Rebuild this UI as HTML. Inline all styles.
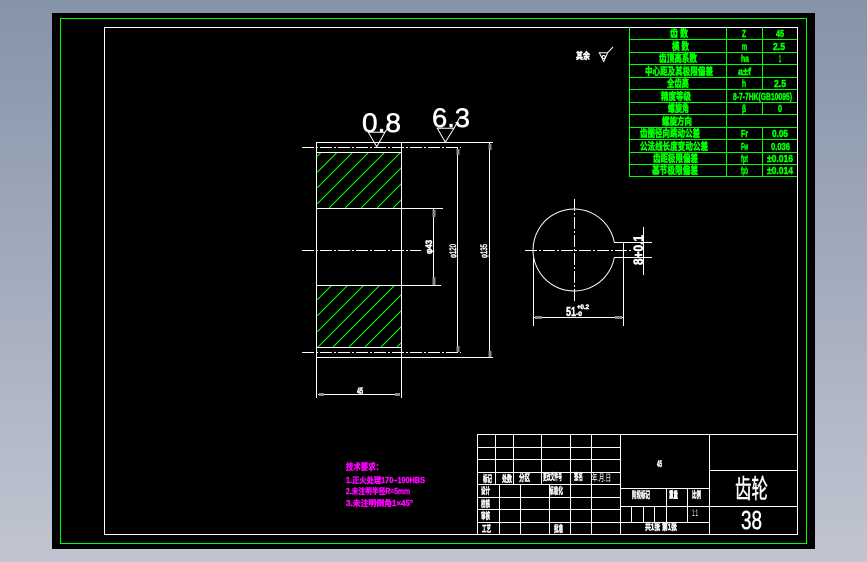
<!DOCTYPE html>
<html><head><meta charset="utf-8"><style>
html,body{margin:0;padding:0;width:867px;height:562px;overflow:hidden;background:linear-gradient(180deg,#8594a9 0%,#a3acbd 50%,#c1c5d1 100%)}
svg{position:absolute;left:0;top:0}
text{font-family:"Liberation Sans","Noto Sans CJK SC",sans-serif}
.g text{fill:#0f0;stroke:#0f0;stroke-width:.55;font-size:10px;font-weight:700}
.w text{fill:#fff;stroke:#fff;stroke-width:.5;font-size:9px;font-weight:700}
.m text{fill:#f0f;stroke:#f0f;stroke-width:.4;font-size:8px;font-weight:700}
</style></head><body>
<svg width="867" height="562" viewBox="0 0 867 562" xmlns="http://www.w3.org/2000/svg">
<rect x="52" y="13" width="763" height="536" fill="#000"/>
<g shape-rendering="crispEdges" fill="none">
<rect x="60.5" y="18.5" width="746" height="525" stroke="#0f0"/>
<rect x="104.5" y="27.5" width="693" height="507" stroke="#fff"/>
<!-- param table -->
<path stroke="#0f0" d="M629.5 27V177M726.5 27V177M762.5 27V89M762.5 102V114M762.5 127V177M630 39.5H797M630 52.5H797M630 64.5H797M630 77.5H797M630 89.5H797M630 102.5H797M630 114.5H797M630 127.5H797M630 139.5H797M630 152.5H797M630 164.5H797M630 176.5H797"/>
<!-- title block -->
<path stroke="#fff" d="M477.5 434V535M477.5 434.5H797M478 447.5H620M478 459.5H620M478 472.5H620M478 484.5H620M478 497.5H620M478 509.5H620M478 522.5H620M495.5 434V484M513.5 434V484M541.5 434V484M570.5 434V534M591.5 434V534M499.5 484V534M520.5 484V534M549.5 484V534M620.5 434V534M709.5 434V534M620 488.5H709M620 506.5H709M620 522.5H709M666.5 488V522M687.5 488V522M631.5 506V522M643.5 506V522M654.5 506V522M710 470.5H797M710 506.5H797"/>
<!-- hatching -->
<g stroke="#0f0">
<path d="M317 156.500L320.500 153M317 172.500L336.500 153M317 188L352 153M317 204L368 153M329 208L384 153M345 208L400.500 152.500M361 208L401 168M377 208L401 184M393 208L401 200"/>
<path d="M317 300L331 286M317 316L347 286M317 332L363 286M317 348L379 286M333 347L394 286M349 347L401 295M365 347L401 311M381 347L401 327M397 347L401 343"/>
</g>
<!-- part lines -->
<g stroke="#fff">
<path d="M316.500 142V398M401.500 142V398M316.500 142.500H493M316.500 152.500H401M316.500 208.500H443M316.500 285.500H441M316.500 347.500H401M316.500 357.500H493"/>
<path d="M302 147.500H461M302 352.500H461M302 250.500H421" stroke-dasharray="12 2 2 2"/>
<path d="M433.500 209V285M457.500 148V352M489.500 143V357M318 394.500H400"/>
<!-- keyway view -->
<path d="M525 250.500H633M574.500 199V302" stroke-dasharray="12 2 2 2"/>
<path d="M614 242.500H652M614 257.500H652M643.500 227V275M623.500 243V326M533.500 258V326M534 317.500H623"/>
</g>
<!-- arrows -->
<g stroke="#8a8a8a" stroke-width="3">
<path d="M434 210V217M434 277V285M458 149V155M458 346V352M490 144V150M490 351V357M319 394.500H324M395 394.500H400M535 317.500H542M615 317.500H622"/>
</g>
</g>
<path fill="none" stroke="#fff" stroke-width="1" d="M614.300 242.300A41 41 0 1 0 614.300 257.700"/>
<g fill="none" stroke="#fff" stroke-width="1">
<path d="M368.300 132.300H385L376.700 146.700ZM385 132.300L392 121"/>
<path d="M437.300 128.300H454L445.300 142.300ZM454 128.300L460 117"/>
<path d="M599.300 52.700H607.700L603.700 61.500ZM607.700 52.700L613 47"/>
<circle cx="603.700" cy="57" r="1.500"/>
</g>
<g class="g">
<text x="670" y="37" textLength="18" lengthAdjust="spacingAndGlyphs">齿 数</text>
<text x="672" y="50" textLength="17" lengthAdjust="spacingAndGlyphs">模 数</text>
<text x="659" y="62" textLength="38" lengthAdjust="spacingAndGlyphs">齿顶高系数</text>
<text x="645" y="75" textLength="68" lengthAdjust="spacingAndGlyphs">中心距及其极限偏差</text>
<text x="667" y="87" textLength="22" lengthAdjust="spacingAndGlyphs">全齿高</text>
<text x="661" y="100" textLength="30" lengthAdjust="spacingAndGlyphs">精度等级</text>
<text x="668" y="112" textLength="21" lengthAdjust="spacingAndGlyphs">螺旋角</text>
<text x="662" y="125" textLength="30" lengthAdjust="spacingAndGlyphs">螺旋方向</text>
<text x="640" y="137" textLength="60" lengthAdjust="spacingAndGlyphs">齿圈径向跳动公差</text>
<text x="640" y="150" textLength="68" lengthAdjust="spacingAndGlyphs">公法线长度变动公差</text>
<text x="653" y="162" textLength="45" lengthAdjust="spacingAndGlyphs">齿距极限偏差</text>
<text x="652" y="174" textLength="46" lengthAdjust="spacingAndGlyphs">基节极限偏差</text>
<text x="742" y="37" textLength="4" lengthAdjust="spacingAndGlyphs">Z</text>
<text x="776" y="37" textLength="8" lengthAdjust="spacingAndGlyphs">45</text>
<text x="742" y="50" textLength="5" lengthAdjust="spacingAndGlyphs">m</text>
<text x="773" y="50" textLength="12" lengthAdjust="spacingAndGlyphs">2.5</text>
<text x="741" y="62" textLength="8" lengthAdjust="spacingAndGlyphs">ha</text>
<text x="779" y="62" textLength="2" lengthAdjust="spacingAndGlyphs">1</text>
<text x="738" y="75" textLength="13" lengthAdjust="spacingAndGlyphs">a±f</text>
<text x="742" y="87" textLength="4" lengthAdjust="spacingAndGlyphs">h</text>
<text x="774" y="87" textLength="12" lengthAdjust="spacingAndGlyphs">2.5</text>
<text x="733" y="100" textLength="59" lengthAdjust="spacingAndGlyphs">8-7-7HK(GB10095)</text>
<text x="742" y="112" textLength="4" lengthAdjust="spacingAndGlyphs">β</text>
<text x="778" y="112" textLength="4" lengthAdjust="spacingAndGlyphs">0</text>
<text x="741" y="137" textLength="7" lengthAdjust="spacingAndGlyphs">Fr</text>
<text x="772" y="137" textLength="16" lengthAdjust="spacingAndGlyphs">0.05</text>
<text x="741" y="150" textLength="7" lengthAdjust="spacingAndGlyphs">Fw</text>
<text x="771" y="150" textLength="19" lengthAdjust="spacingAndGlyphs">0.036</text>
<text x="741" y="162" textLength="7" lengthAdjust="spacingAndGlyphs">fpt</text>
<text x="767" y="162" textLength="26" lengthAdjust="spacingAndGlyphs">±0.016</text>
<text x="741" y="174" textLength="7" lengthAdjust="spacingAndGlyphs">fpb</text>
<text x="767" y="174" textLength="26" lengthAdjust="spacingAndGlyphs">±0.014</text>
</g>
<g class="w">
<text x="483" y="482" textLength="9" lengthAdjust="spacingAndGlyphs">标记</text>
<text x="502" y="482" textLength="10" lengthAdjust="spacingAndGlyphs">处数</text>
<text x="519" y="481" textLength="11" lengthAdjust="spacingAndGlyphs">分区</text>
<text x="543" y="480" textLength="19" lengthAdjust="spacingAndGlyphs">更改文件号</text>
<text x="574" y="480" textLength="9" lengthAdjust="spacingAndGlyphs">签名</text>
<text x="592" y="481" textLength="19" lengthAdjust="spacingAndGlyphs" style="font-weight:400;stroke-width:.1">年.月.日</text>
<text x="481" y="494" textLength="9" lengthAdjust="spacingAndGlyphs">设计</text>
<text x="549" y="494" textLength="14" lengthAdjust="spacingAndGlyphs">标准化</text>
<text x="481" y="507" textLength="9" lengthAdjust="spacingAndGlyphs">校核</text>
<text x="481" y="519" textLength="9" lengthAdjust="spacingAndGlyphs">审核</text>
<text x="482" y="532" textLength="9" lengthAdjust="spacingAndGlyphs">工艺</text>
<text x="554" y="532" textLength="9" lengthAdjust="spacingAndGlyphs">批准</text>
<text x="657" y="467" textLength="5" lengthAdjust="spacingAndGlyphs">45</text>
<text x="632" y="498" textLength="18" lengthAdjust="spacingAndGlyphs">阶段标记</text>
<text x="669" y="498" textLength="9" lengthAdjust="spacingAndGlyphs">重量</text>
<text x="692" y="498" textLength="9" lengthAdjust="spacingAndGlyphs">比例</text>
<text x="692" y="516" textLength="6" lengthAdjust="spacingAndGlyphs" style="font-weight:400;stroke-width:0">1:1</text>
<text x="645" y="530" textLength="32" lengthAdjust="spacingAndGlyphs">共1张 第1张</text>
<text x="576" y="59" textLength="14" lengthAdjust="spacingAndGlyphs">其余</text>
<text x="357" y="394" textLength="6" lengthAdjust="spacingAndGlyphs">45</text>
<text transform="translate(432,254) rotate(-90)" textLength="14" lengthAdjust="spacingAndGlyphs">φ43</text>
<text transform="translate(456,258) rotate(-90)" textLength="14" lengthAdjust="spacingAndGlyphs" style="font-weight:400">φ120</text>
<text transform="translate(487,258) rotate(-90)" textLength="14" lengthAdjust="spacingAndGlyphs" style="font-weight:400">φ135</text>
<text x="566" y="316" textLength="10" lengthAdjust="spacingAndGlyphs" style="font-size:13px">51</text>
<text x="577" y="309" textLength="12" lengthAdjust="spacingAndGlyphs" style="font-size:6px">+0.2</text>
<text x="576" y="316" textLength="6" lengthAdjust="spacingAndGlyphs" style="font-size:6px">-0</text>
<text transform="translate(643,265) rotate(-90)" textLength="30" lengthAdjust="spacingAndGlyphs" style="font-size:14px;stroke-width:.5">8+0.1</text>
</g>
<g fill="#fff" stroke="#fff" stroke-width=".5">
<text x="362" y="132" font-size="27" textLength="39" lengthAdjust="spacingAndGlyphs">0.8</text>
<text x="432" y="127" font-size="27" textLength="38" lengthAdjust="spacingAndGlyphs">6.3</text>
<text x="735" y="498" font-size="26" textLength="33" lengthAdjust="spacingAndGlyphs">齿轮</text>
<text x="741" y="529" font-size="26" textLength="21" lengthAdjust="spacingAndGlyphs">38</text>
</g>
<g class="m">
<text x="346" y="470" textLength="37" lengthAdjust="spacingAndGlyphs" style="font-size:9px">技术要求：</text>
<text x="346" y="483" textLength="79" lengthAdjust="spacingAndGlyphs">1.正火处理170~190HBS</text>
<text x="346" y="494" textLength="64" lengthAdjust="spacingAndGlyphs">2.未注明半径R=5mm</text>
<text x="346" y="506" textLength="67" lengthAdjust="spacingAndGlyphs">3.未注明倒角1×45°</text>
</g>
</svg>
</body></html>
